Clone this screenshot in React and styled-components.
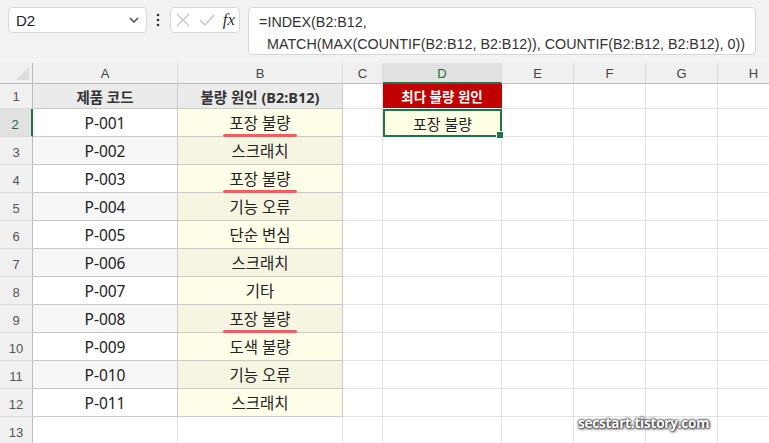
import styled, { createGlobalStyle } from "styled-components";

const GlobalStyle = createGlobalStyle`
  html, body {
    margin: 0;
    padding: 0;
    background: #f3f3f3;
    overflow: hidden;
  }
  * { box-sizing: border-box; }
`;

const Page = styled.div`
  width: 769px;
  height: 443px;
  overflow: hidden;
  position: relative;
  font-family: "Noto Sans", "Noto Sans CJK KR", sans-serif;
`;

const TopBar = styled.div`
  display: flex;
  align-items: flex-start;
  padding: 7px 13px 0 8px;
  height: 63px;
  background: #f3f3f3;
`;

const NameBox = styled.div`
  width: 142px;
  height: 26px;
  background: #fff;
  border: 1px solid #d6d6d6;
  border-radius: 4px;
  display: flex;
  align-items: center;
  justify-content: space-between;
  padding: 0 6px 0 7px;
  font-family: "Liberation Sans", "Noto Sans", sans-serif;
  font-size: 15px;
  color: #222;
`;

const Kebab = styled.div`
  width: 22px;
  height: 26px;
  display: flex;
  align-items: center;
  justify-content: center;
`;

const FxBox = styled.div`
  width: 72px;
  height: 26px;
  background: #fff;
  border: 1px solid #d6d6d6;
  border-radius: 4px;
  display: flex;
  align-items: center;
  justify-content: space-between;
  padding: 0 4px 0 4px;
  margin-left: 1px;
  margin-right: 8px;
`;

const Fx = styled.span`
  font-family: "Liberation Serif", "DejaVu Serif", serif;
  font-style: italic;
  font-size: 17px;
  color: #333;
  line-height: 1;
  padding-bottom: 2px;
`;

const FormulaBox = styled.div`
  flex: 1;
  height: 48px;
  background: #fff;
  border: 1px solid #d6d6d6;
  border-radius: 4px;
  padding: 3px 10px 0 10px;
  font-family: "Liberation Sans", sans-serif;
  font-size: 14.3px;
  line-height: 22px;
  color: #333;
  white-space: pre;
`;

const Sheet = styled.div`
  display: grid;
  grid-template-columns: 33px 145px 165px 40px 119px 72px 72px 72px 72px;
  grid-template-rows: 21px 25px repeat(12, 28px);
  background: #fff;
`;

const Corner = styled.div`
  background: #f0f0f0;
  border-right: 1px solid #bdbdbd;
  border-bottom: 1px solid #bdbdbd;
  position: relative;
  &::after {
    content: "";
    position: absolute;
    right: 3px;
    bottom: 3px;
    width: 0;
    height: 0;
    border-left: 13px solid transparent;
    border-bottom: 13px solid #dcdcdc;
  }
`;

const ColHead = styled.div`
  background: ${(p) => (p.$active ? "#e1e1e1" : "#f0f0f0")};
  color: ${(p) => (p.$active ? "#1e6b41" : "#444")};
  border-right: 1px solid #dadada;
  border-bottom: ${(p) => (p.$active ? "2px solid #217346" : "1px solid #bdbdbd")};
  font-family: "Liberation Sans", sans-serif;
  font-size: 13px;
  display: flex;
  align-items: center;
  justify-content: center;
  padding-top: 1px;
`;

const RowHead = styled.div`
  background: ${(p) => (p.$active ? "#e1e1e1" : "#f0f0f0")};
  color: ${(p) => (p.$active ? "#1e6b41" : "#555")};
  border-right: ${(p) => (p.$active ? "2px solid #217346" : "1px solid #bdbdbd")};
  border-bottom: 1px solid #dadada;
  font-family: "Liberation Sans", sans-serif;
  font-size: 13px;
  display: flex;
  align-items: flex-end;
  justify-content: center;
  padding-bottom: 4px;
  padding-right: ${(p) => (p.$active ? "1px" : "0")};
`;

const Cell = styled.div`
  background: ${(p) => p.$bg || "#fff"};
  border-right: 1px solid ${(p) => (p.$table ? "#cacaca" : "#e2e2e2")};
  border-bottom: 1px solid ${(p) => (p.$table ? "#cacaca" : "#e2e2e2")};
  color: #222;
  font-size: 15.5px;
  display: flex;
  align-items: center;
  justify-content: center;
  position: relative;
  white-space: nowrap;
`;

const HeadCell = styled(Cell)`
  background: #ebebeb;
  font-weight: 700;
  font-size: 14.5px;
  color: #333;
`;

const RedHead = styled(Cell)`
  background: #c00000;
  color: #fff;
  font-weight: 700;
  font-size: 13.5px;
  border-right: 1px solid #c00000;
  border-bottom: 1px solid #fff;
`;

const Selected = styled(Cell)`
  background: #ffffe6;
  border: 2px solid #217346;
  font-size: 15px;
  padding-top: 1px;
  z-index: 1;
  &::after {
    content: "";
    position: absolute;
    right: -4px;
    bottom: -4px;
    width: 6px;
    height: 6px;
    background: #217346;
    border: 1px solid #fff;
  }
`;

const Marked = styled.span`
  position: relative;
  line-height: 18px;
  &::after {
    content: "";
    position: absolute;
    left: -6px;
    right: -6px;
    bottom: -5px;
    height: 2.5px;
    border-radius: 2px;
    background: #f0605a;
    z-index: 2;
  }
`;

const Watermark = styled.div`
  position: absolute;
  left: 578px;
  top: 414px;
  font-family: "Open Sans", "Noto Sans", sans-serif;
  font-weight: 700;
  font-size: 13.5px;
  color: #fff;
  letter-spacing: -0.2px;
  text-shadow: 0 0 2px #222, 0 0 3px #333, 1px 1px 3px #444;
`;

const cols = ["A", "B", "C", "D", "E", "F", "G", "H"];

const data = [
  ["P-001", "포장 불량", true],
  ["P-002", "스크래치"],
  ["P-003", "포장 불량", true],
  ["P-004", "기능 오류"],
  ["P-005", "단순 변심"],
  ["P-006", "스크래치"],
  ["P-007", "기타"],
  ["P-008", "포장 불량", true],
  ["P-009", "도색 불량"],
  ["P-010", "기능 오류"],
  ["P-011", "스크래치"],
];

const Blanks = ({ from }) =>
  cols.slice(from).map((c) => <Cell key={c} />);

export default function App() {
  return (
    <Page>
      <GlobalStyle />
      <TopBar>
        <NameBox>
          D2
          <svg width="12" height="8" viewBox="0 0 12 8">
            <path d="M2 2 L6 6 L10 2" fill="none" stroke="#444" strokeWidth="1.4" />
          </svg>
        </NameBox>
        <Kebab>
          <svg width="4" height="14" viewBox="0 0 4 14">
            <circle cx="2" cy="2" r="1.3" fill="#333" />
            <circle cx="2" cy="7" r="1.3" fill="#333" />
            <circle cx="2" cy="12" r="1.3" fill="#333" />
          </svg>
        </Kebab>
        <FxBox>
          <svg width="16" height="16" viewBox="0 0 16 16">
            <path d="M2 2 L14 14 M14 2 L2 14" stroke="#c4c4c4" strokeWidth="1.3" />
          </svg>
          <svg width="18" height="16" viewBox="0 0 18 16">
            <path d="M2 8 L7 13 L16 3" fill="none" stroke="#c4c4c4" strokeWidth="1.3" />
          </svg>
          <Fx>fx</Fx>
        </FxBox>
        <FormulaBox>
          {"=INDEX(B2:B12,\n  MATCH(MAX(COUNTIF(B2:B12, B2:B12)), COUNTIF(B2:B12, B2:B12), 0))"}
        </FormulaBox>
      </TopBar>

      <Sheet>
        <Corner />
        {cols.map((c) => (
          <ColHead key={c} $active={c === "D"}>{c}</ColHead>
        ))}

        <RowHead>1</RowHead>
        <HeadCell $table>제품 코드</HeadCell>
        <HeadCell $table>불량 원인 (B2:B12)</HeadCell>
        <Cell />
        <RedHead>최다 불량 원인</RedHead>
        <Blanks from={4} />

        {data.map(([code, cause, mark], i) => {
          const band = i % 2 === 1;
          return [
            <RowHead key={"h" + i} $active={i === 0}>{i + 2}</RowHead>,
            <Cell key={"a" + i} $table $bg={band ? "#f7f7f7" : "#fff"}>{code}</Cell>,
            <Cell key={"b" + i} $table $bg={band ? "#f5f5e2" : "#fdfde8"}>
              {mark ? <Marked>{cause}</Marked> : cause}
            </Cell>,
            <Cell key={"c" + i} />,
            i === 0 ? (
              <Selected key={"d" + i}>포장 불량</Selected>
            ) : (
              <Cell key={"d" + i} />
            ),
            ...cols.slice(4).map((c) => <Cell key={c + i} />),
          ];
        })}

        <RowHead>13</RowHead>
        <Blanks from={0} />
      </Sheet>

      <Watermark>secstart.tistory.com</Watermark>
    </Page>
  );
}
